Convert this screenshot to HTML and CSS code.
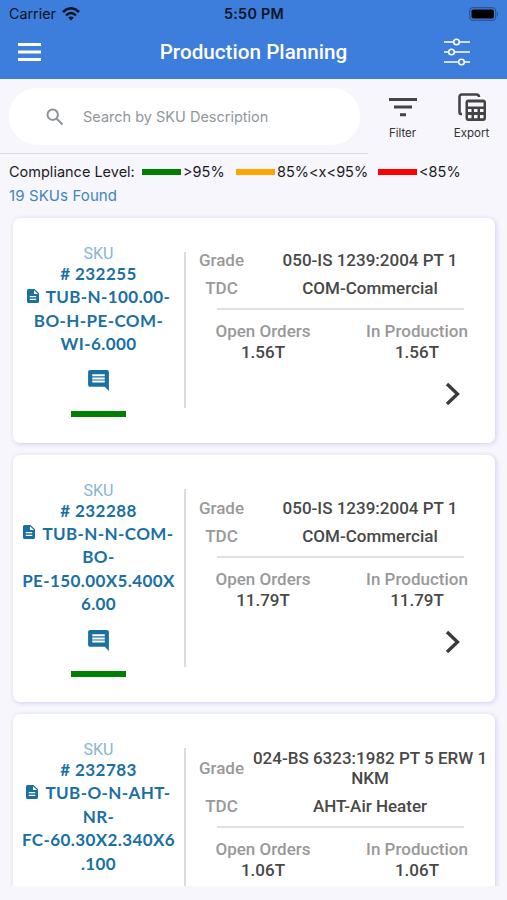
FILE: index.html
```html
<!DOCTYPE html>
<html lang="en">
<head>
    <meta charset="UTF-8">
    <meta name="viewport" content="width=device-width, initial-scale=1.0">
    <title>Production Planning</title>
    <link rel="stylesheet" href="styles.css">
</head>
<body>
    <svg class="sprite" width="0" height="0">
        <symbol id="doc" viewBox="0 0 12 14">
            <path fill-rule="evenodd" d="M1.500 0H7.500L12 4.300V12.500Q12 14 10.500 14H1.500Q0 14 0 12.500V1.500Q0 0 1.500 0ZM7 1.200V5H11ZM2.800 7V8.200H9.200V7ZM2.800 9.800V11H9.200V9.800Z"/>
        </symbol>
        <symbol id="comment" viewBox="0 0 24 24">
            <path d="M21.990 4c0-1.100-.89-2-1.990-2H4c-1.100 0-2 .9-2 2v12c0 1.100.9 2 2 2h14l4 4-.01-18zM18 14H6v-2h12v2zm0-3H6V9h12v2zm0-3H6V6h12v2z"/>
        </symbol>
        <symbol id="chevron" viewBox="0 0 16 24">
            <path d="M2 2L12.500 12L2 22" fill="none" stroke="#3a3a3a" stroke-width="3.300"/>
        </symbol>
    </svg>

    <header class="header">
        <div class="status-bar">
            <div class="carrier">
                <span>Carrier</span>
                <svg width="18" height="14" viewBox="0 0 18 14">
                    <g fill="none" stroke="#0b1322" stroke-width="2.500">
                        <path d="M1 5Q9-2.400 17 5"/>
                        <path d="M4 8.300Q9 3.700 14 8.300"/>
                    </g>
                    <path d="M6.200 10.600Q9 8.400 11.800 10.600L9 13.600Z" fill="#0b1322"/>
                </svg>
            </div>
            <div class="clock">5:50 PM</div>
            <div class="battery">
                <svg width="30" height="14" viewBox="0 0 30 14">
                    <rect x=".7" y=".7" width="26" height="12.600" rx="3.500" fill="none" stroke="#2c5592" stroke-width="1.300"/>
                    <rect x="2.500" y="2.500" width="22.400" height="9" rx="1.800" fill="#000"/>
                    <path d="M28 4.500Q30 7 28 9.500Z" fill="#2c5592"/>
                </svg>
            </div>
        </div>
        <div class="nav-bar">
            <svg class="menu-icon" width="23" height="20" viewBox="0 0 23 20">
                <path d="M0 2.500H23M0 10H23M0 17.500H23" stroke="#fff" stroke-width="3"/>
            </svg>
            <h1>Production Planning</h1>
            <svg class="sliders-icon" width="28" height="28" viewBox="0 0 28 28">
                <g fill="none" stroke="#fff" stroke-width="1.600">
                    <path d="M1 4H10.500M16.500 4H27M1 14H5.500M11.500 14H27M1 24H15.500M21.500 24H27"/>
                    <circle cx="13.500" cy="4" r="2.800"/>
                    <circle cx="8.500" cy="14" r="2.800"/>
                    <circle cx="18.500" cy="24" r="2.800"/>
                </g>
            </svg>
        </div>
    </header>

    <div class="toolbar">
        <div class="search-wrap">
            <div class="search">
                <svg width="18" height="18" viewBox="0 0 18 18">
                    <g fill="none" stroke="#8a9398" stroke-width="2">
                        <circle cx="6.700" cy="6.700" r="5.200"/>
                        <path d="M10.700 10.700L16.500 16.500"/>
                    </g>
                </svg>
                <span>Search by SKU Description</span>
            </div>
        </div>
        <div class="action filter">
            <svg width="28" height="32" viewBox="0 0 28 32">
                <path d="M0 7.500H28M5 15.100H23M11 22.800H17" stroke="#444" stroke-width="3"/>
            </svg>
            <span>Filter</span>
        </div>
        <div class="action export">
            <svg width="28" height="32" viewBox="0 0 28 32">
                <path d="M4 22H3Q1.500 22 1.500 20V5Q1.500 2.500 4 2.500H18.500Q21 2.500 21 5" fill="none" stroke="#444" stroke-width="2.600"/>
                <path fill="#444" fill-rule="evenodd" d="M10.500 7.500H25Q28 7.500 28 10.500V26Q28 29 25 29H10.500Q7.500 29 7.500 26V10.500Q7.500 7.500 10.500 7.500ZM10 10.500V14.500H25.500V10.500ZM10 17V20H13.500V17ZM16 17V20H19.500V17ZM22 17V20H25.500V17ZM10 23V26.300H13.500V23ZM16 23V26.300H19.500V23ZM22 23V26.300H25.500V23Z"/>
            </svg>
            <span>Export</span>
        </div>
    </div>

    <div class="legend">
        <span class="legend-title">Compliance Level:</span>
        <span class="swatch green"></span><span class="high">&gt;95%</span>
        <span class="swatch orange"></span><span class="mid">85%&lt;x&lt;95%</span>
        <span class="swatch red"></span><span class="low">&lt;85%</span>
    </div>
    <div class="count">19 SKUs Found</div>

    <main class="list">
        <section class="card">
            <div class="sku">
                <div class="sku-label">SKU</div>
                <div class="sku-number"># 232255</div>
                <div class="sku-name"><svg class="doc"><use href="#doc"/></svg>TUB-N-100.00-<br>BO-H-PE-COM-<br>WI-6.000</div>
                <svg class="comment"><use href="#comment"/></svg>
                <div class="level green"></div>
            </div>
            <div class="divider"></div>
            <div class="details">
                <div class="row"><span class="label">Grade</span><span class="value">050-IS 1239:2004 PT 1</span></div>
                <div class="row"><span class="label">TDC</span><span class="value">COM-Commercial</span></div>
                <div class="line"></div>
                <div class="totals">
                    <div><div class="label">Open Orders</div><div class="value">1.56T</div></div>
                    <div><div class="label">In Production</div><div class="value">1.56T</div></div>
                </div>
                <svg class="chevron"><use href="#chevron"/></svg>
            </div>
        </section>

        <section class="card">
            <div class="sku">
                <div class="sku-label">SKU</div>
                <div class="sku-number"># 232288</div>
                <div class="sku-name"><svg class="doc"><use href="#doc"/></svg>TUB-N-N-COM-<br>BO-<br>PE-150.00X5.400X<br>6.00</div>
                <svg class="comment"><use href="#comment"/></svg>
                <div class="level green"></div>
            </div>
            <div class="divider"></div>
            <div class="details">
                <div class="row"><span class="label">Grade</span><span class="value">050-IS 1239:2004 PT 1</span></div>
                <div class="row"><span class="label">TDC</span><span class="value">COM-Commercial</span></div>
                <div class="line"></div>
                <div class="totals">
                    <div><div class="label">Open Orders</div><div class="value">11.79T</div></div>
                    <div><div class="label">In Production</div><div class="value">11.79T</div></div>
                </div>
                <svg class="chevron"><use href="#chevron"/></svg>
            </div>
        </section>

        <section class="card">
            <div class="sku">
                <div class="sku-label">SKU</div>
                <div class="sku-number"># 232783</div>
                <div class="sku-name"><svg class="doc"><use href="#doc"/></svg>TUB-O-N-AHT-<br>NR-<br>FC-60.30X2.340X6<br>.100</div>
                <svg class="comment"><use href="#comment"/></svg>
                <div class="level green"></div>
            </div>
            <div class="divider"></div>
            <div class="details">
                <div class="row"><span class="label">Grade</span><span class="value">024-BS 6323:1982 PT 5 ERW 1<br>NKM</span></div>
                <div class="row"><span class="label">TDC</span><span class="value">AHT-Air Heater</span></div>
                <div class="line"></div>
                <div class="totals">
                    <div><div class="label">Open Orders</div><div class="value">1.06T</div></div>
                    <div><div class="label">In Production</div><div class="value">1.06T</div></div>
                </div>
                <svg class="chevron"><use href="#chevron"/></svg>
            </div>
        </section>
    </main>
</body>
</html>
```

FILE: styles.css
```css
* {
    box-sizing: border-box;
}

body {
    margin: 0;
    height: 900px;
    padding-bottom: 14px;
    display: flex;
    flex-direction: column;
    overflow: hidden;
    background-color: #f6f6fc;
    font-family: Roboto, sans-serif;
    white-space: nowrap;
}

svg {
    display: block;
    flex: none;
}

.sprite {
    height: 0;
}

.header {
    flex: none;
    height: 79px;
    background-color: #3d7ddb;
}

.status-bar {
    height: 27px;
    padding: 0 8px 0 9px;
    display: grid;
    grid-template-columns: 1fr 80px 1fr;
    align-items: center;
    font-family: Inter, sans-serif;
    font-size: 14.3px;
    color: #0b1322;
}

.carrier {
    display: flex;
    align-items: center;
    gap: 6px;
}

.clock {
    font-weight: 600;
    text-align: center;
    letter-spacing: 0.3px;
}

.battery {
    display: flex;
    justify-content: flex-end;
}

.nav-bar {
    height: 50px;
    padding: 0 36px 0 18px;
    display: flex;
    align-items: center;
    justify-content: space-between;
}

h1 {
    margin: 0 0 0 23px;
    font-size: 20.7px;
    font-weight: 500;
    color: #fff;
}

.toolbar {
    flex: none;
    height: 75px;
    display: flex;
}

.search-wrap {
    width: 368px;
    padding: 9px 8px 8px 9px;
    border-bottom: 1px solid #dfdfe6;
}

.search {
    height: 57px;
    padding-left: 37px;
    display: flex;
    align-items: center;
    gap: 19px;
    border-radius: 28px;
    background-color: #fff;
    font-family: Inter, sans-serif;
    font-size: 14.5px;
    color: #8f979c;
}

.action {
    width: 69px;
    padding-top: 13px;
    display: flex;
    flex-direction: column;
    align-items: center;
    font-family: Inter, sans-serif;
    font-size: 11.5px;
    line-height: 18px;
    color: #333;
}

.legend {
    flex: none;
    height: 35px;
    padding-left: 9px;
    display: flex;
    align-items: center;
    font-family: Inter, sans-serif;
    font-size: 14.5px;
    color: #1c1c1e;
}

.legend-title {
    width: 133px;
}

.swatch {
    width: 39px;
    height: 6px;
    margin-right: 2px;
}

.high {
    width: 53px;
}

.mid {
    width: 101px;
}

.green {
    background-color: #008000;
}

.orange {
    background-color: #ffa500;
}

.red {
    background-color: #ff0000;
}

.count {
    flex: none;
    height: 23px;
    padding-left: 9px;
    font-family: Inter, sans-serif;
    font-size: 15px;
    letter-spacing: 0.1px;
    line-height: 13px;
    color: #3e87bd;
}

.list {
    flex: 1;
    min-height: 0;
    padding: 6px 12px 0 13px;
    overflow: hidden;
}

.card {
    height: 247.5px;
    margin-bottom: 12px;
    display: flex;
    border-radius: 7px;
    background-color: #fff;
    box-shadow: 1px 1px 5px #cfcdf0;
}

.card:first-child {
    height: 224.5px;
}

.sku {
    width: 171px;
    padding-top: 26px;
    display: flex;
    flex-direction: column;
    align-items: center;
    font-family: Lato, sans-serif;
    font-size: 17px;
    font-weight: 700;
    letter-spacing: 0.4px;
    color: #1a70a3;
    text-align: center;
}

.sku-label {
    font-family: Roboto, sans-serif;
    font-size: 16px;
    font-weight: 400;
    letter-spacing: 0;
    line-height: 20px;
    color: #86b5d1;
}

.sku-number {
    margin-top: -1px;
    line-height: 21px;
}

.sku-name {
    margin-top: 1px;
    line-height: 23.5px;
}

.doc {
    width: 12px;
    height: 14px;
    margin-right: 7px;
    display: inline-block;
    vertical-align: 0.5px;
    fill: #1a70a3;
}

.comment {
    width: 25px;
    height: 25px;
    margin-top: 12px;
    fill: #1a70a3;
}

.level {
    width: 55px;
    height: 6px;
    margin-top: 18px;
}

.divider {
    width: 2px;
    margin: 34px 0 35px;
    background-color: #dcdcdc;
}

.details {
    flex: 1;
    display: flex;
    flex-direction: column;
    justify-content: center;
    font-size: 17px;
    font-weight: 500;
    line-height: 20.5px;
    text-align: center;
}

.row {
    margin-bottom: 7px;
    padding: 0 7px 0 5px;
    display: grid;
    grid-template-columns: 61px 236px;
    align-items: center;
}

.label {
    color: #999;
}

.value {
    color: #484848;
}

.line {
    width: 247px;
    height: 1.5px;
    margin: 3px 0 11.5px 31px;
    background-color: #e0e0e0;
}

.totals {
    display: grid;
    grid-template-columns: 154px 154px;
}

.chevron {
    width: 16px;
    height: 24px;
    margin: 20px 0 4px 259px;
}
```
